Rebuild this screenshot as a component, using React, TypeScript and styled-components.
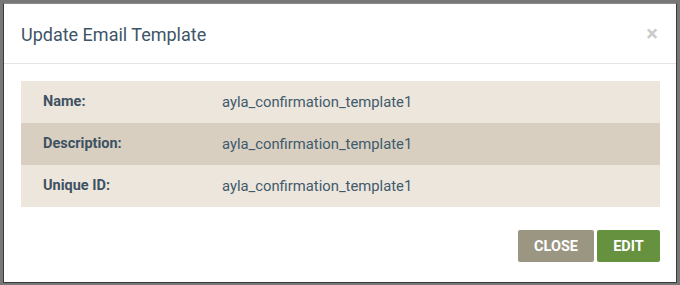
import React from 'react';
import styled, { createGlobalStyle } from 'styled-components';

const GlobalStyle = createGlobalStyle`
  html, body {
    margin: 0;
    padding: 0;
    background: #777777;
    font-family: Roboto, "Liberation Sans", Arial, sans-serif;
  }
`;

const Backdrop = styled.div`
  width: 680px;
  height: 285px;
  box-sizing: border-box;
  padding: 3px 3px 2px 3px;
  background: #777777;
`;

// Modal dialog
const Modal = styled.div`
  height: 100%;
  box-sizing: border-box;
  background: #fff;
  border: 1px solid #3a3a3a;
  border-top-color: #8a8a8a;
  display: flex;
  flex-direction: column;
`;

const Header = styled.div`
  display: flex;
  align-items: flex-start;
  justify-content: space-between;
  padding: 18px 18px 15px 17px;
  border-bottom: 1px solid #e5e5e5;
`;

const Title = styled.h4`
  margin: 0;
  font-size: 18px;
  line-height: 26px;
  font-weight: 400;
  color: #3d5567;
`;

const CloseX = styled.button`
  border: none;
  background: none;
  padding: 0;
  margin-top: 1px;
  font-family: inherit;
  font-size: 22px;
  line-height: 22px;
  font-weight: 700;
  color: #000;
  opacity: 0.2;
  cursor: pointer;
`;

const Body = styled.div`
  padding: 17px 16px 0 17px;
`;

const Table = styled.table`
  width: 100%;
  border-collapse: collapse;
  line-height: 20px;
`;

const Row = styled.tr<{ $striped?: boolean }>`
  background: ${p => (p.$striped ? '#d8cfc1' : '#ede6dd')};
  height: 42px;
`;

const Label = styled.td`
  width: 201px;
  box-sizing: border-box;
  padding: 0 0 0 22px;
  font-size: 14.5px;
  font-weight: 700;
  color: #3e5262;
`;

const Value = styled.td`
  padding: 0;
  font-size: 14.8px;
  color: #3f5a6b;
`;

const Footer = styled.div`
  display: flex;
  justify-content: flex-end;
  gap: 3px;
  padding: 23px 16px 0 0;
`;

const Button = styled.button<{ $variant: 'close' | 'edit' }>`
  height: 32px;
  border: none;
  border-radius: 2px;
  padding: 0 ${p => (p.$variant === 'close' ? '15px' : '14px')};
  min-width: ${p => (p.$variant === 'close' ? '76px' : '63px')};
  background: ${p => (p.$variant === 'close' ? '#9a9682' : '#66923f')};
  color: #fff;
  font-family: inherit;
  font-size: 14.5px;
  font-weight: 700;
  text-transform: uppercase;
  cursor: pointer;
`;

const rows = [
  { label: 'Name:', value: 'ayla_confirmation_template1' },
  { label: 'Description:', value: 'ayla_confirmation_template1' },
  { label: 'Unique ID:', value: 'ayla_confirmation_template1' },
];

const App: React.FC = () => {
  return (
    <>
      <GlobalStyle />
      <Backdrop>
        <Modal>
          <Header>
            <Title>Update Email Template</Title>
            <CloseX aria-label="Close">×</CloseX>
          </Header>
          <Body>
            <Table>
              <tbody>
                {rows.map((r, i) => (
                  <Row key={r.label} $striped={i % 2 === 1}>
                    <Label>{r.label}</Label>
                    <Value>{r.value}</Value>
                  </Row>
                ))}
              </tbody>
            </Table>
          </Body>
          <Footer>
            <Button $variant="close">Close</Button>
            <Button $variant="edit">Edit</Button>
          </Footer>
        </Modal>
      </Backdrop>
    </>
  );
};

export default App;
